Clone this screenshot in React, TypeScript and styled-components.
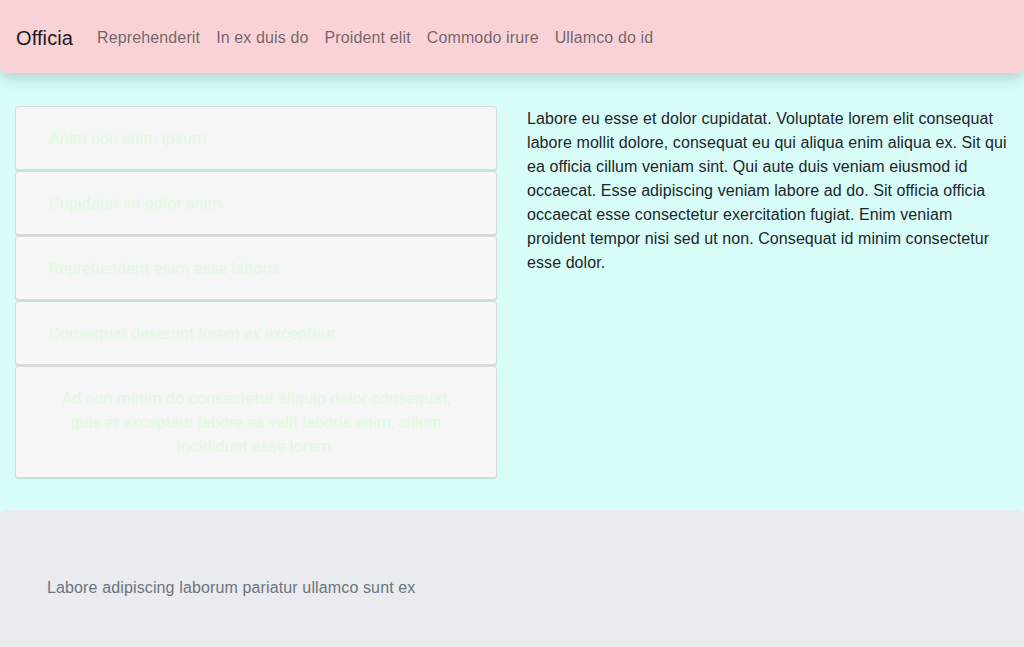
import React from "react";
import styled, { createGlobalStyle } from "styled-components";

const GlobalStyle = createGlobalStyle`
  html, body { margin: 0; padding: 0; }
  body {
    font-family: "Liberation Sans", Arial, sans-serif;
    font-size: 16px;
    line-height: 24px;
    color: #212529;
    background: #ffffff;
  }
  * { box-sizing: border-box; }
`;

const Page = styled.div`
  display: flex;
  flex-direction: column;
  min-height: 647px;
  background: #d8fdf9;
`;

const NavBar = styled.nav`
  position: relative;
  z-index: 2;
  display: flex;
  align-items: center;
  height: 73px;
  padding: 0 16px;
  background: #f8d2d7;
  border-radius: 0 0 6px 6px;
  box-shadow: 0 6px 14px rgba(0, 0, 0, 0.16);
`;

const Brand = styled.a`
  font-size: 20px;
  line-height: 30px;
  letter-spacing: 0.1px;
  color: #1b1b1b;
  margin-right: 16px;
  text-decoration: none;
  padding-top: 2px;
`;

const NavList = styled.ul`
  display: flex;
  list-style: none;
  margin: 0;
  padding: 0;
`;

const NavLink = styled.a`
  display: block;
  padding: 2px 8px 0;
  font-size: 16px;
  letter-spacing: 0.13px;
  color: rgba(0, 0, 0, 0.55);
  text-decoration: none;
`;

const Main = styled.main`
  display: grid;
  grid-template-columns: 482px 482px;
  column-gap: 30px;
  padding: 33px 15px 32px;
  align-items: start;
`;

const CardStack = styled.div`
  display: flex;
  flex-direction: column;
  gap: 1px;
`;

const Card = styled.div<{ $center?: boolean }>`
  background: #f6f6f6;
  border: 1px solid #dadada;
  border-radius: 3px;
  box-shadow: 0 1px 1px rgba(0, 0, 0, 0.12);
  padding: 20px 33px 18px;
  color: #dffcdf;
  font-family: Roboto, "Liberation Sans", sans-serif;
  font-size: 16px;
  line-height: 24px;
  letter-spacing: 0.1px;
  text-align: ${(p) => (p.$center ? "center" : "left")};
`;

const Paragraph = styled.p`
  margin: 0;
  padding-top: 1px;
  font-size: 16px;
  line-height: 24px;
  letter-spacing: 0.08px;
  color: #212529;
`;

const Footer = styled.footer`
  flex: 1;
  background: #e9ebee;
  border-radius: 6px 6px 0 0;
  padding: 66px 47px 46px;
  color: #6c757d;
  font-size: 16px;
  line-height: 24px;
  letter-spacing: 0.13px;
`;

const links = ["Reprehenderit", "In ex duis do", "Proident elit", "Commodo irure", "Ullamco do id"];
const cards = [
  "Anim non enim ipsum.",
  "Cupidatat sit dolor anim.",
  "Reprehenderit enim esse laboris.",
  "Consequat deserunt lorem ex excepteur.",
];

export default function App() {
  return (
    <>
      <GlobalStyle />
      <Page>
        <NavBar>
          <Brand href="#">Officia</Brand>
          <NavList>
            {links.map((l) => (
              <li key={l}>
                <NavLink href="#">{l}</NavLink>
              </li>
            ))}
          </NavList>
        </NavBar>
        <Main>
          <CardStack>
            {cards.map((c) => (
              <Card key={c}>{c}</Card>
            ))}
            <Card $center>
              Ad non minim do consectetur aliquip dolor consequat, quis et excepteur labore ea velit laboris enim, cillum
              incididunt esse lorem.
            </Card>
          </CardStack>
          <Paragraph>
            Labore eu esse et dolor cupidatat. Voluptate lorem elit consequat labore mollit dolore, consequat eu qui aliqua
            enim aliqua ex. Sit qui ea officia cillum veniam sint. Qui aute duis veniam eiusmod id occaecat. Esse adipiscing
            veniam labore ad do. Sit officia officia occaecat esse consectetur exercitation fugiat. Enim veniam proident
            tempor nisi sed ut non. Consequat id minim consectetur esse dolor.
          </Paragraph>
        </Main>
        <Footer>Labore adipiscing laborum pariatur ullamco sunt ex</Footer>
      </Page>
    </>
  );
}
